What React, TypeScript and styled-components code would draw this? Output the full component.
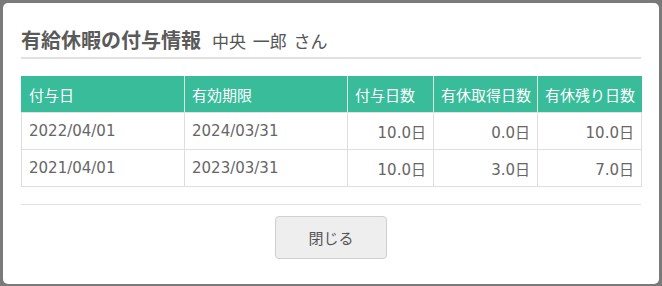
import React, { FC } from "react";
import styled, { createGlobalStyle } from "styled-components";

const GlobalStyle = createGlobalStyle`
  html, body {
    margin: 0;
    padding: 0;
    background: #7a7a7a;
  }
  body {
    font-family: "DejaVu Sans", "Noto Sans CJK JP", sans-serif;
    color: #555;
  }
`;

const Backdrop = styled.div`
  width: 662px;
  height: 286px;
  padding: 3px 3px 2px 3px;
  box-sizing: border-box;
`;

const Modal = styled.section`
  background: #fff;
  border-radius: 5px;
  height: 100%;
  box-sizing: border-box;
  padding: 0 18px;
  display: flex;
  flex-direction: column;
`;

const Header = styled.header`
  margin-top: 24px;
  padding-bottom: 4px;
  border-bottom: 2px solid #e0e0e0;
  display: flex;
  align-items: baseline;
  gap: 11px;
`;

const Title = styled.h2`
  margin: 0;
  font-family: "Noto Sans CJK JP", sans-serif;
  font-size: 20px;
  line-height: 26px;
  font-weight: 700;
  color: #5a5a5a;
`;

const Person = styled.span`
  font-family: "Noto Sans CJK JP", sans-serif;
  font-size: 17px;
  color: #555;
  word-spacing: 3px;
`;

const Table = styled.table`
  margin-top: 17px;
  width: 620px;
  border-collapse: collapse;
  table-layout: fixed;
  font-size: 15px;
`;

const Th = styled.th<{ $w: number }>`
  width: ${(p) => p.$w}px;
  height: 36px;
  box-sizing: border-box;
  background: #38bc9a;
  color: #fff;
  font-family: "Noto Sans CJK JP", sans-serif;
  font-weight: 400;
  font-size: 15px;
  text-align: left;
  padding: 0 7px;
  border: 1px solid #e2e2e2;
  border-top-color: #38bc9a;
  white-space: nowrap;
  &:first-child {
    border-left-color: #38bc9a;
  }
  &:last-child {
    border-right-color: #38bc9a;
  }
`;

const Td = styled.td<{ $num?: boolean }>`
  height: 37px;
  box-sizing: border-box;
  padding: 0 7px;
  border: 1px solid #dedede;
  text-align: ${(p) => (p.$num ? "right" : "left")};
  color: #666;
`;

const Footer = styled.footer`
  margin-top: 17px;
  border-top: 1px solid #e2e2e2;
  display: flex;
  justify-content: center;
  padding-top: 11px;
`;

const CloseButton = styled.button`
  width: 112px;
  height: 43px;
  background: #eeeeee;
  border: 1px solid #cfcfcf;
  border-radius: 4px;
  font-family: "Noto Sans CJK JP", sans-serif;
  font-size: 15px;
  color: #555;
  cursor: pointer;
`;

const columns = [
  { label: "付与日", w: 163 },
  { label: "有効期限", w: 163 },
  { label: "付与日数", w: 86 },
  { label: "有休取得日数", w: 104 },
  { label: "有休残り日数", w: 104 },
];

const rows = [
  ["2022/04/01", "2024/03/31", "10.0", "0.0", "10.0"],
  ["2021/04/01", "2023/03/31", "10.0", "3.0", "7.0"],
];

const Day = styled.span`
  font-family: "Noto Sans CJK JP", sans-serif;
`;

const App: FC = () => {
  return (
    <>
      <GlobalStyle />
      <Backdrop>
        <Modal>
          <Header>
            <Title>有給休暇の付与情報</Title>
            <Person>中央 一郎 さん</Person>
          </Header>
          <Table>
            <thead>
              <tr>
                {columns.map((c) => (
                  <Th key={c.label} $w={c.w}>
                    {c.label}
                  </Th>
                ))}
              </tr>
            </thead>
            <tbody>
              {rows.map((r) => (
                <tr key={r[0]}>
                  <Td>{r[0]}</Td>
                  <Td>{r[1]}</Td>
                  {r.slice(2).map((v, i) => (
                    <Td key={i} $num>
                      {v}
                      <Day>日</Day>
                    </Td>
                  ))}
                </tr>
              ))}
            </tbody>
          </Table>
          <Footer>
            <CloseButton>閉じる</CloseButton>
          </Footer>
        </Modal>
      </Backdrop>
    </>
  );
};

export default App;
